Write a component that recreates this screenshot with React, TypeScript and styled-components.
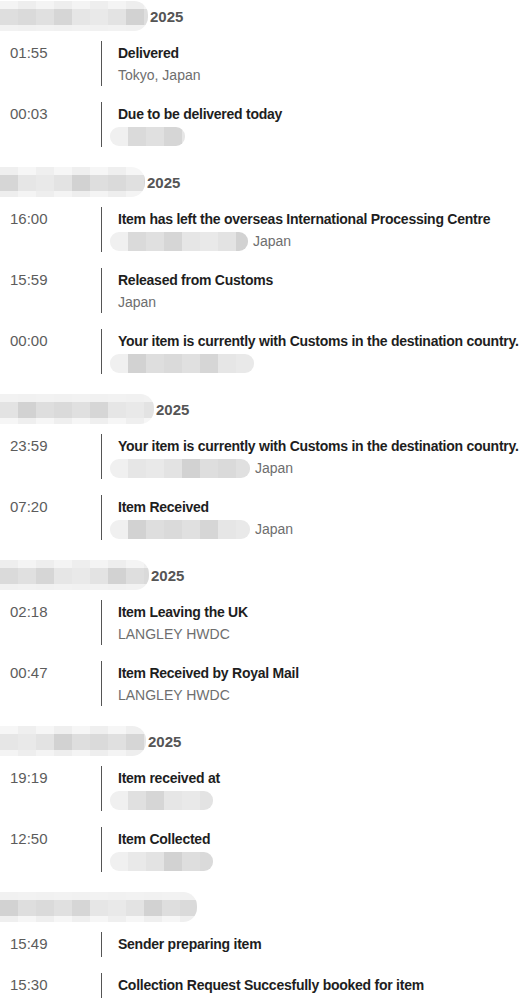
import React from "react";
import styled, { createGlobalStyle } from "styled-components";

const GlobalStyle = createGlobalStyle`
  body {
    margin: 0;
    background: #ffffff;
    font-family: "Liberation Sans", Arial, sans-serif;
  }
`;

interface IEvent {
  time: string;
  title: string;
  place?: string;
  hidden?: number;
}

interface IGroup {
  hidden: number;
  year?: string;
  events: IEvent[];
}

const groups: IGroup[] = [
  {
    hidden: 148,
    year: "2025",
    events: [
      { time: "01:55", title: "Delivered", place: "Tokyo, Japan" },
      { time: "00:03", title: "Due to be delivered today", hidden: 75 },
    ],
  },
  {
    hidden: 145,
    year: "2025",
    events: [
      {
        time: "16:00",
        title: "Item has left the overseas International Processing Centre",
        place: "Japan",
        hidden: 138,
      },
      { time: "15:59", title: "Released from Customs", place: "Japan" },
      {
        time: "00:00",
        title: "Your item is currently with Customs in the destination country.",
        hidden: 144,
      },
    ],
  },
  {
    hidden: 154,
    year: "2025",
    events: [
      {
        time: "23:59",
        title: "Your item is currently with Customs in the destination country.",
        place: "Japan",
        hidden: 140,
      },
      { time: "07:20", title: "Item Received", place: "Japan", hidden: 140 },
    ],
  },
  {
    hidden: 149,
    year: "2025",
    events: [
      { time: "02:18", title: "Item Leaving the UK", place: "LANGLEY HWDC" },
      { time: "00:47", title: "Item Received by Royal Mail", place: "LANGLEY HWDC" },
    ],
  },
  {
    hidden: 146,
    year: "2025",
    events: [
      { time: "19:19", title: "Item received at", hidden: 103 },
      { time: "12:50", title: "Item Collected", hidden: 103 },
    ],
  },
  {
    hidden: 197,
    events: [
      { time: "15:49", title: "Sender preparing item" },
      { time: "15:30", title: "Collection Request Succesfully booked for item" },
    ],
  },
];

// grey tones used for the pixelated (redacted) blocks
const tones = ["#e9e9e9", "#dedede", "#d6d6d6", "#e3e3e3", "#dadada", "#e6e6e6", "#d2d2d2", "#e0e0e0"];
const lightTones = ["#f4f4f4", "#efefef", "#f2f2f2", "#eeeeee", "#f6f6f6", "#f1f1f1"];

const shadesFor = (width: number, seed: number, light: boolean) => {
  const list = light ? lightTones : tones;
  const count = Math.ceil(width / 18);
  return Array.from({ length: count }, (_, i) => list[(i * 3 + seed) % list.length]);
};

const Page = styled.div`
  width: 530px;
  padding: 1px 0 8px;
  display: flex;
  flex-direction: column;
  gap: 20px;
`;

const Group = styled.section`
  display: flex;
  flex-direction: column;
  gap: 10px;
`;

const GroupHeader = styled.div`
  display: flex;
  align-items: center;
  gap: 2px;
  height: 30px;
`;

const Year = styled.span`
  font-size: 15px;
  font-weight: bold;
  color: #555555;
`;

const Mosaic = styled.div<{ $width: number; $round: string }>`
  width: ${(p) => p.$width}px;
  display: flex;
  flex-direction: column;
  overflow: hidden;
  border-radius: ${(p) => p.$round};
  flex-shrink: 0;
`;

const MosaicRow = styled.div<{ $height: number }>`
  display: flex;
  height: ${(p) => p.$height}px;
`;

const Cell = styled.div<{ $shade: string }>`
  width: 18px;
  flex-shrink: 0;
  background: ${(p) => p.$shade};
`;

const Rows = styled.div`
  display: flex;
  flex-direction: column;
  gap: 16px;
`;

const Row = styled.div`
  display: grid;
  grid-template-columns: 101px 1fr;
`;

const Time = styled.div`
  padding-left: 10px;
  padding-top: 1px;
  font-size: 15px;
  line-height: 22px;
  color: #5c5c5c;
`;

const Detail = styled.div`
  border-left: 1px solid #555555;
  padding-left: 16px;
  min-height: 25px;
  display: flex;
  flex-direction: column;
`;

const Title = styled.div`
  padding-top: 1px;
  font-size: 14px;
  letter-spacing: -0.25px;
  font-weight: bold;
  line-height: 22px;
  color: #1e1e1e;
  white-space: nowrap;
`;

const Place = styled.div`
  display: flex;
  align-items: center;
  gap: 5px;
  height: 22px;
  font-size: 14px;
  color: #6e6e6e;
`;

const PlaceMosaic = styled(Mosaic)`
  margin-left: -8px;
`;

function Redacted({ width, seed, rows, round }: { width: number; seed: number; rows: number[]; round: string }) {
  return (
    <Mosaic $width={width} $round={round}>
      {rows.map((h, r) => (
        <MosaicRow key={r} $height={h}>
          {shadesFor(width, seed + r, r !== 1).map((s, i) => (
            <Cell key={i} $shade={s} />
          ))}
        </MosaicRow>
      ))}
    </Mosaic>
  );
}

function PlaceRedacted({ width, seed }: { width: number; seed: number }) {
  return (
    <PlaceMosaic $width={width} $round="9px">
      <MosaicRow $height={19}>
        {shadesFor(width, seed, false).map((s, i) => (
          <Cell key={i} $shade={i === 0 ? "#f0f0f0" : s} />
        ))}
      </MosaicRow>
    </PlaceMosaic>
  );
}

export default function App() {
  return (
    <>
      <GlobalStyle />
      <Page>
        {groups.map((g, gi) => (
          <Group key={gi}>
            <GroupHeader>
              <Redacted width={g.hidden} seed={gi} rows={[8, 16, 6]} round="0 14px 14px 0" />
              {g.year && <Year>{g.year}</Year>}
            </GroupHeader>
            <Rows>
              {g.events.map((e, ei) => (
                <Row key={ei}>
                  <Time>{e.time}</Time>
                  <Detail>
                    <Title>{e.title}</Title>
                    {(e.place || e.hidden) && (
                      <Place>
                        {e.hidden && <PlaceRedacted width={e.hidden} seed={gi + ei} />}
                        {e.place && <span>{e.place}</span>}
                      </Place>
                    )}
                  </Detail>
                </Row>
              ))}
            </Rows>
          </Group>
        ))}
      </Page>
    </>
  );
}
